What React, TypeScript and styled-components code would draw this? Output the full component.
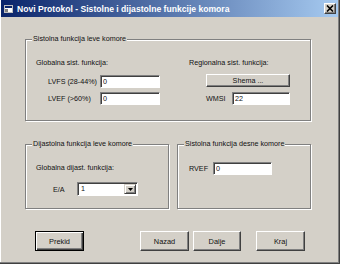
import React from 'react'
import styled, { createGlobalStyle, css } from 'styled-components'

const GlobalStyle = createGlobalStyle`
    html, body {
        margin: 0;
        padding: 0;
        background: #d4d0c8;
    }
    body {
        font-family: "Liberation Sans", Arial, sans-serif;
    }
`

const Window = styled.div`
    width: 340px;
    height: 264px;
    box-sizing: border-box;
    background: #d4d0c8;
    border-right: 1px solid #404040;
    border-bottom: 1px solid #404040;
    box-shadow: inset -1px -1px 0 #808080, inset 1px 0 0 #ffffff;
    display: flex;
    flex-direction: column;
    font-size: 7.2px;
    color: #111;
    overflow: hidden;
`

const TitleBar = styled.div`
    height: 17px;
    margin: 0 1px;
    padding: 0 2px 0 3px;
    background: linear-gradient(to right, #0a246a, #a6caf0);
    display: flex;
    align-items: center;
    gap: 4px;
`

const TitleText = styled.span`
    flex: 1;
    color: #fff;
    font-weight: bold;
    font-size: 8.6px;
    white-space: nowrap;
`

const raisedCss = css`
    border: 1px solid;
    border-color: #ffffff #404040 #404040 #ffffff;
    box-shadow: inset -1px -1px 0 #808080;
    background: #d4d0c8;
`

const CloseButton = styled.div`
    ${raisedCss}
    box-sizing: border-box;
    width: 12px;
    height: 11px;
    display: flex;
    align-items: center;
    justify-content: center;
`

const Body = styled.div`
    display: flex;
    flex-direction: column;
    padding: 22px 0 0 25px;
`

const Group = styled.div<{ $w: number; $h: number }>`
    position: relative;
    box-sizing: border-box;
    width: ${(p) => p.$w}px;
    height: ${(p) => p.$h}px;
    border: 1px solid #808080;
    box-shadow: inset 1px 1px 0 #ffffff, 1px 1px 0 #ffffff;
`

const Legend = styled.span`
    position: absolute;
    top: -6px;
    left: 6px;
    padding: 0 1px;
    line-height: 10px;
    background: #d4d0c8;
    white-space: nowrap;
`

const TopContent = styled.div`
    display: grid;
    grid-template-columns: 153px 1fr;
    padding: 18px 0 0 10px;
`

const Column = styled.div`
    display: flex;
    flex-direction: column;
    align-items: flex-start;
`

const Heading = styled.div`
    line-height: 10px;
    height: 10px;
    white-space: nowrap;
`

const FieldGrid = styled.div<{ $cols: string; $top: number; $left: number }>`
    display: grid;
    grid-template-columns: ${(p) => p.$cols};
    row-gap: 4px;
    align-items: center;
    margin-top: ${(p) => p.$top}px;
    padding-left: ${(p) => p.$left}px;
    white-space: nowrap;
`

const TextBox = styled.input`
    box-sizing: border-box;
    width: 100%;
    height: 13px;
    margin: 0;
    padding: 0 0 0 2px;
    border: 1px solid;
    border-color: #808080 #ffffff #ffffff #808080;
    box-shadow: inset 1px 1px 0 #404040;
    background: #fff;
    font-family: inherit;
    font-size: 7.2px;
    color: #111;
    outline: none;
`

const SmallButton = styled.div<{ $w: number; $top: number; $left: number }>`
    ${raisedCss}
    box-sizing: border-box;
    width: ${(p) => p.$w}px;
    height: 13px;
    margin-top: ${(p) => p.$top}px;
    margin-left: ${(p) => p.$left}px;
    display: flex;
    align-items: center;
    justify-content: center;
`

const BottomRow = styled.div`
    display: flex;
    gap: 8px;
    margin-top: 23px;
`

const GroupContent = styled.div<{ $top: number; $left: number }>`
    display: flex;
    flex-direction: column;
    padding: ${(p) => p.$top}px 0 0 ${(p) => p.$left}px;
`

const Combo = styled.div`
    box-sizing: border-box;
    height: 14px;
    display: flex;
    align-items: stretch;
    border: 1px solid;
    border-color: #808080 #ffffff #ffffff #808080;
    box-shadow: inset 1px 1px 0 #404040;
    background: #fff;
    padding: 1px 1px 1px 3px;
`

const ComboValue = styled.span`
    flex: 1;
    line-height: 10px;
`

const ComboArrow = styled.div`
    box-sizing: border-box;
    width: 12px;
    border: 1px solid;
    border-color: #d4d0c8 #404040 #404040 #d4d0c8;
    box-shadow: inset 1px 1px 0 #fff, inset -1px -1px 0 #808080;
    background: #d4d0c8;
    display: flex;
    align-items: center;
    justify-content: center;
`

const ButtonRow = styled.div`
    display: flex;
    margin-top: 22px;
    padding-left: 10px;
`

const PushButton = styled.div<{ $w: number; $ml?: number; $default?: boolean }>`
    box-sizing: border-box;
    width: ${(p) => p.$w}px;
    height: 20px;
    margin-left: ${(p) => p.$ml ?? 0}px;
    display: flex;
    align-items: center;
    justify-content: center;
    font-size: 7.4px;
    ${(p) =>
        p.$default
            ? css`
                  border: 1px solid #000;
                  box-shadow: inset 1px 1px 0 #fff, inset -1px -1px 0 #404040,
                      inset -2px -2px 0 #808080;
              `
            : raisedCss}
`

function WindowIcon() {
    return (
        <svg width="9" height="8" viewBox="0 0 9 8">
            <rect x="0.5" y="0.5" width="8" height="7" fill="#fff" stroke="#c0c0c0" />
            <rect x="1" y="1" width="7" height="2" fill="#0a246a" />
            <rect x="1" y="4" width="3" height="3" fill="#808080" />
        </svg>
    )
}

function CloseGlyph() {
    return (
        <svg width="8" height="7" viewBox="0 0 8 7">
            <path d="M1 0.5 L7 6.5 M7 0.5 L1 6.5" stroke="#000" strokeWidth="1.6" />
        </svg>
    )
}

function DownArrow() {
    return (
        <svg width="5" height="3" viewBox="0 0 5 3">
            <path d="M0 0 H5 L2.5 3 Z" fill="#000" />
        </svg>
    )
}

export default function App() {
    return (
        <>
            <GlobalStyle />
            <Window>
                <TitleBar>
                    <WindowIcon />
                    <TitleText>Novi Protokol - Sistolne i dijastolne funkcije komora</TitleText>
                    <CloseButton>
                        <CloseGlyph />
                    </CloseButton>
                </TitleBar>
                <Body>
                    <Group $w={286} $h={82}>
                        <Legend>Sistolna funkcija leve komore</Legend>
                        <TopContent>
                            <Column>
                                <Heading>Globalna sist. funkcija:</Heading>
                                <FieldGrid $cols="52px 60px" $top={7} $left={12}>
                                    <span>LVFS (28-44%)</span>
                                    <TextBox defaultValue="0" />
                                    <span>LVEF (&gt;60%)</span>
                                    <TextBox defaultValue="0" />
                                </FieldGrid>
                            </Column>
                            <Column>
                                <Heading>Regionalna sist. funkcija:</Heading>
                                <SmallButton $w={84} $top={6} $left={17}>
                                    Shema ...
                                </SmallButton>
                                <FieldGrid $cols="26px 58px" $top={5} $left={17}>
                                    <span>WMSI</span>
                                    <TextBox defaultValue="22" />
                                </FieldGrid>
                            </Column>
                        </TopContent>
                    </Group>
                    <BottomRow>
                        <Group $w={144} $h={65}>
                            <Legend>Dijastolna funkcija leve komore</Legend>
                            <GroupContent $top={18} $left={10}>
                                <Heading>Globalna dijast. funkcija:</Heading>
                                <FieldGrid $cols="24px 61px" $top={9} $left={17}>
                                    <span>E/A</span>
                                    <Combo>
                                        <ComboValue>1</ComboValue>
                                        <ComboArrow>
                                            <DownArrow />
                                        </ComboArrow>
                                    </Combo>
                                </FieldGrid>
                            </GroupContent>
                        </Group>
                        <Group $w={134} $h={65}>
                            <Legend>Sistolna funkcija desne komore</Legend>
                            <GroupContent $top={17} $left={11}>
                                <FieldGrid $cols="24px 59px" $top={0} $left={0}>
                                    <span>RVEF</span>
                                    <TextBox defaultValue="0" />
                                </FieldGrid>
                            </GroupContent>
                        </Group>
                    </BottomRow>
                    <ButtonRow>
                        <PushButton $w={49} $default>
                            Prekid
                        </PushButton>
                        <PushButton $w={49} $ml={56}>
                            Nazad
                        </PushButton>
                        <PushButton $w={48} $ml={4}>
                            Dalje
                        </PushButton>
                        <PushButton $w={49} $ml={15}>
                            Kraj
                        </PushButton>
                    </ButtonRow>
                </Body>
            </Window>
        </>
    )
}
